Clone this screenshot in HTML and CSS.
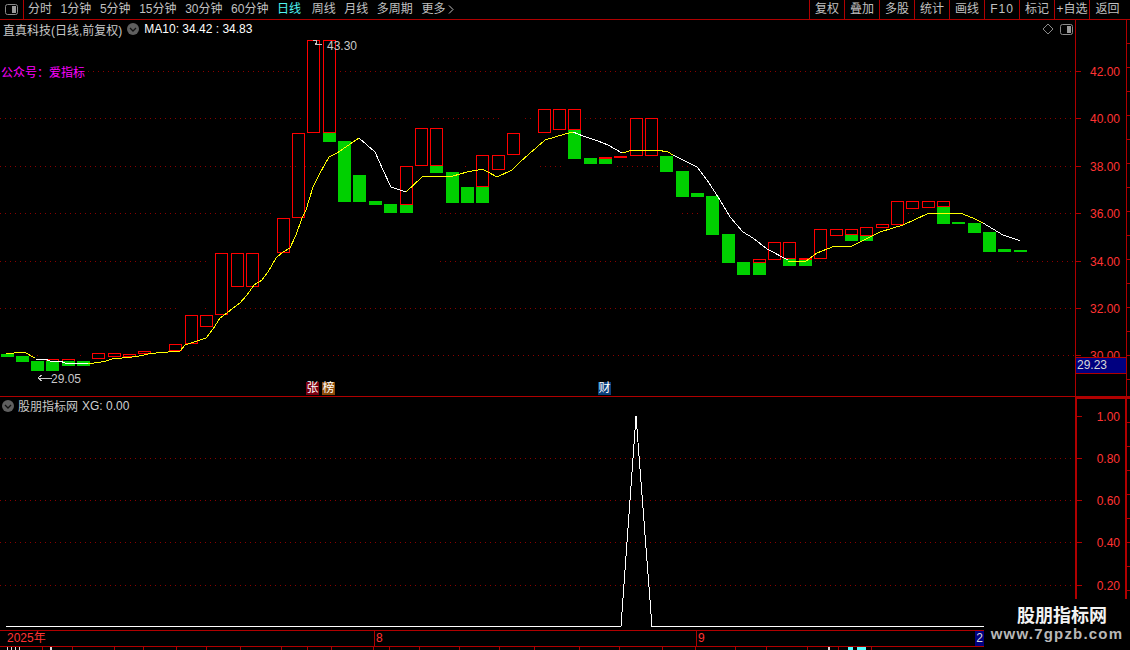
FILE: index.html
```html
<!DOCTYPE html>
<html lang="zh">
<head>
<meta charset="utf-8">
<title>直真科技</title>
<link rel="stylesheet" href="styles.css">
</head>
<body>
<div class="app">
  <header class="toolbar">
    <div class="panel-btn"><svg width="13" height="11" viewBox="0 0 13 11"><rect x=".5" y=".5" width="12" height="10" rx="2" class="ico-frame"/><rect x="7" y="2" width="4" height="7" class="ico-fill"/></svg></div>
    <nav class="periods">
      <span>分时</span><span>1分钟</span><span>5分钟</span><span>15分钟</span><span>30分钟</span><span>60分钟</span><span class="on">日线</span><span>周线</span><span>月线</span><span>多周期</span><span class="more">更多<svg width="6" height="9" viewBox="0 0 6 9"><path d="M1 .5l4 4-4 4"/></svg></span>
    </nav>
    <div class="tools">
      <span>复权</span><span>叠加</span><span>多股</span><span>统计</span><span>画线</span><span class="spaced">F10</span><span>标记</span><span>+自选</span><span class="back">返回</span>
    </div>
  </header>

  <section class="pane pane-main">
    <div class="plot">
      <svg class="chart" width="1075" height="377" viewBox="0 20 1075 377">
        <g class="grid">
          <path d="M88 71H302M340 71H1075"/>
          <path d="M0 118H303M340 118H410M433 118H502M525 118H535M580 118H627M665 118H1075"/>
          <path d="M0 166H300M305 166H325M465 166H470M540 166H562M617 166H660M682 166H690M710 166H1075"/>
          <path d="M0 213H275M440 213H653M682 213H702M725 213H870M908 213H917M985 213H1075"/>
          <path d="M0 261H210M440 261H720M815 261H993M1017 261H1075"/>
          <path d="M0 308H178M205 308H210M240 308H1075"/>
          <path d="M32 355H42M80 355H85M188 355H1075"/>
        </g>
        <g class="up" id="ups"></g>
        <g class="dn" id="dns"></g>
        <polyline class="ma white" points="36,359 45,359 50,361 60,361 65,363 75,363.5 88,364"/>
        <polyline class="ma yellow" points="6,354 14,353 24,352 35,358"/>
        <polyline class="ma yellow" points="88,364 101,362 106,361 112,359 122,358 132,357 142,355.5 148,354 156,353 168,352 180,351 185,345 200,340 206,338 210,333 215,326 220,318 227,313 233,308 240,303 247,295 254,285 262,280 268,272 276,258 283,252 290,248 296,235 302,218 306,210 313,187 320,173 329,157 337,153 359,138"/>
        <polyline class="ma white" points="359,138 375,152 383,170 391,187 400,190 406,192"/>
        <polyline class="ma yellow" points="406,192 422,177 450,176 453,176 460,174 467,172 478,170 482,169 488,172 497,177 512,170 520,162 537,147 545,140 555,137 565,134 573,132"/>
        <polyline class="ma white" points="573,132 583,136 598,141 608,145 622,153"/>
        <polyline class="ma yellow" points="622,153 633,150 657,150 668,152 673,155"/>
        <polyline class="ma white" points="673,155 697,167 707,180 720,200 730,217 743,232 753,238 767,249 788,260"/>
        <polyline class="ma yellow" points="788,261 806,261 817,253 827,249 835,246 852,246 870,237 880,232 903,225 927,214 937,213 960,213 973,218 983,223"/>
        <polyline class="ma white" points="983,223 1003,235 1018,240 1020,241"/>
        <path class="note-line" d="M313 41a2 2 0 1 1 2 3l7 1"/>
        <path class="note-line" d="M38 378h14M38 378l4-3M38 378l4 3"/>
      </svg>
      <div class="title-row">
        <span class="stock">直真科技(日线,前复权)</span>
        <span class="round-btn"><svg width="12" height="12" viewBox="0 0 12 12"><path d="M3 5l3 3 3-3"/></svg></span>
        <span class="ma-text">MA10: 34.42 : 34.83</span>
      </div>
      <div class="plot-icons">
        <svg width="12" height="12" viewBox="0 0 12 12"><path d="M6 1l5 5-5 5-5-5z" class="ico-frame"/></svg>
        <svg width="13" height="11" viewBox="0 0 13 11"><rect x=".5" y=".5" width="12" height="10" rx="2" class="ico-frame"/><rect x="7" y="2" width="4" height="7" class="ico-fill"/></svg>
      </div>
      <div class="promo">公众号：爱指标</div>
      <div class="mark mark-high">43.30</div>
      <div class="mark mark-low">29.05</div>
      <div class="badge badge-zhang">张</div>
      <div class="badge badge-bang">榜</div>
      <div class="badge badge-cai">财</div>
    </div>
    <aside class="axis axis-main">
      <div class="tick t42">42.00</div>
      <div class="tick t40">40.00</div>
      <div class="tick t38">38.00</div>
      <div class="tick t36">36.00</div>
      <div class="tick t34">34.00</div>
      <div class="tick t32">32.00</div>
      <div class="tick t30">30.00</div>
      <div class="price-tag">29.23</div>
    </aside>
  </section>

  <section class="pane pane-sub">
    <div class="plot">
      <svg class="chart" width="1075" height="233" viewBox="0 397 1075 233">
        <g class="grid">
          <path d="M0 458H1075M0 500H1075M0 542H1075M0 585H1075"/>
        </g>
        <polyline class="signal" points="6,626.5 621,626.5 636,416 652,626.5 1010,626.5"/>
      </svg>
      <div class="title-row title-sub">
        <span class="round-btn"><svg width="12" height="12" viewBox="0 0 12 12"><path d="M3 5l3 3 3-3"/></svg></span>
        <span class="stock">股朋指标网</span>
        <span class="ma-text sub-text">XG: 0.00</span>
      </div>
    </div>
    <aside class="axis axis-sub">
      <div class="tick s100">1.00</div>
      <div class="tick s80">0.80</div>
      <div class="tick s60">0.60</div>
      <div class="tick s40">0.40</div>
      <div class="tick s20">0.20</div>
    </aside>
  </section>

  <footer class="dates">
    <span class="d d-year">2025年</span>
    <span class="d d-8">8</span>
    <span class="d d-9">9</span>
    <span class="d-now">2</span>
  </footer>
  <div class="statusbar">
    <i class="c1"></i><i class="c2"></i><i class="c3"></i><i class="c4"></i><i class="c5"></i><i class="c6"></i><i class="c7"></i><i class="c8"></i><i class="c9"></i><i class="c10"></i><i class="c11"></i><i class="c12"></i><i class="c13"></i><i class="c14"></i><i class="c15"></i><i class="c16"></i><i class="c17"></i><i class="c18"></i><i class="c19"></i><i class="c20"></i><i class="c21"></i><i class="c22"></i><i class="c23"></i><i class="c24"></i><i class="c25"></i>
    <b class="peek peek-a"></b><b class="peek peek-b"></b><b class="peek peek-c"></b><b class="peek peek-d"></b>
  </div>

  <div class="watermark">
    <div class="wm-cn">股朋指标网</div>
    <div class="wm-url">www.7gpzb.com</div>
  </div>
</div>
<script src="chart.js"></script>
</body>
</html>
```
FILE: styles.css
```css
* { box-sizing: border-box; }
html, body { margin: 0; padding: 0; background: #000; }
body { width: 1130px; height: 650px; overflow: hidden; font-family: "Liberation Sans", "Noto Sans CJK SC", sans-serif; color: #c8c8c8; }
.app { position: relative; width: 1130px; height: 650px; display: flex; flex-direction: column; background: #000; overflow: hidden; }

.toolbar { height: 20px; flex: none; display: flex; align-items: stretch; border-bottom: 1px solid #b00000; font-size: 12px; line-height: 19px; }
.panel-btn { width: 24px; flex: none; border-right: 1px solid #b00000; display: flex; align-items: center; justify-content: center; }
.ico-frame { fill: none; stroke: #8a8a8a; stroke-width: 1; }
.ico-fill { fill: #9a9a9a; }
.periods { display: flex; gap: 8.6px; padding-left: 4px; flex: 1; color: #c0c0c0; }
.periods span { white-space: nowrap; }
.periods .on { color: #4ff4f4; padding-right: 2px; }
.more { display: inline-flex; align-items: center; gap: 3px; }
.more path { fill: none; stroke: #c0c0c0; stroke-width: 1; }
.tools { display: flex; height: 19px; }
.tools span { width: 35px; text-align: center; border-left: 1px solid #b00000; color: #c0c0c0; white-space: nowrap; }
.tools .back { width: 41px; padding-right: 5px; }
.tools .spaced { letter-spacing: 1px; }

.pane { position: relative; flex: none; display: flex; border-bottom: 1px solid #b00000; }
.pane-main { height: 377px; }
.pane-sub { height: 234px; }
.plot { position: relative; width: 1075px; flex: none; }
.chart { position: absolute; left: 0; top: 0; display: block; }
.grid path { fill: none; stroke: #8a0000; stroke-width: 1; stroke-dasharray: 1 4; shape-rendering: crispEdges; }
.up rect { fill: none; stroke: #ff0000; stroke-width: 1; shape-rendering: crispEdges; }
.up rect.solid { fill: #ff0000; }
.dn rect { fill: #00d000; shape-rendering: crispEdges; }
.ma { fill: none; stroke-width: 1; shape-rendering: crispEdges; }
.yellow { stroke: #ffff00; }
.white { stroke: #ffffff; }
.note-line { fill: none; stroke: #c8c8c8; stroke-width: 1; shape-rendering: crispEdges; }
.signal { fill: none; stroke: #ffffff; stroke-width: 1; shape-rendering: crispEdges; }

.title-row { position: relative; display: flex; align-items: center; gap: 5px; height: 18px; font-size: 12px; padding-left: 3px; white-space: nowrap; }
.title-sub { height: 17px; padding-left: 2px; gap: 4px; }
.stock { color: #c8c8c8; }
.ma-text { color: #ffffff; }
.sub-text { color: #d0d0d0; }
.round-btn { width: 12px; height: 12px; border-radius: 50%; background: #5f5f5f; display: inline-flex; }
.round-btn svg path { fill: none; stroke: #111; stroke-width: 1.3; }
.plot-icons { position: absolute; left: 1042px; top: 3px; display: flex; gap: 6px; align-items: center; }
.promo { position: absolute; left: 1px; top: 45px; font-size: 12px; color: #ff00ff; line-height: 16px; }
.mark { position: absolute; font-size: 12px; line-height: 14px; color: #c8c8c8; }
.mark-high { left: 327px; top: 19px; }
.mark-low { left: 51px; top: 352px; }
.badge { position: absolute; top: 362px; width: 13px; height: 13px; font-size: 12px; line-height: 13px; text-align: center; color: #fff; }
.badge-zhang { left: 306px; background: #7a0010; }
.badge-bang { left: 322px; background: #8a4a08; }
.badge-cai { left: 598px; background: #0b3f7a; }

.axis { position: relative; flex: 1; border-left: 1px solid #b00000; }
.axis::after { content: ""; position: absolute; right: 0; top: 0; bottom: 0; width: 3px; background: repeating-linear-gradient(#000 0, #000 23px, #b00000 23px, #b00000 24px); }
.axis-sub { border-left-width: 2px; border-top: 2px solid #b00000; margin-right: 0; background: linear-gradient(#b00000, #b00000) 48px 0 / 2px 100% no-repeat; }
.axis-main { background: linear-gradient(#b00000, #b00000) 50px 0 / 1px 100% no-repeat; }
.tick { position: absolute; left: 0; right: 10px; text-align: right; font-size: 12px; line-height: 14px; color: #ff3333; }
.tick::before { content: ""; position: absolute; left: 0; top: 7px; width: 5px; height: 1px; background: #b00000; }
.t42 { top: 45px; } .t40 { top: 92px; } .t38 { top: 140px; } .t36 { top: 187px; }
.t34 { top: 235px; } .t32 { top: 282px; } .t30 { top: 329px; }
.t42::before, .t40::before, .t38::before, .t36::before, .t34::before, .t32::before, .t30::before { top: 6px; }
.s100 { top: 11px; } .s80 { top: 53px; } .s60 { top: 95px; } .s40 { top: 137px; } .s20 { top: 180px; }
.axis-sub .tick::before { top: 6px; }
.price-tag { position: absolute; left: 0; top: 337px; width: 50px; height: 17px; background: #000080; color: #d8d8d8; font-size: 12px; line-height: 15px; padding-left: 1px; border-top: 1px solid #b00000; border-bottom: 1px solid #b00000; }

.dates { position: relative; height: 16px; flex: none; border-bottom: 1px solid #b00000; font-size: 12px; line-height: 15px; color: #ff3333; }
.d { position: absolute; top: 0; padding-left: 1px; }
.d-year { left: 6px; }
.d-8 { left: 374px; border-left: 1px solid #b00000; }
.d-9 { left: 696px; border-left: 1px solid #b00000; }
.d-now { position: absolute; left: 975px; top: 0; width: 9px; height: 15px; background: #000080; color: #d8d8d8; text-align: center; }
.statusbar { position: relative; display: flex; height: 3px; flex: none; }
.statusbar i { display: block; height: 3px; border-right: 1px solid #b00000; }
.c1 { width: 43px; } .c2 { width: 30px; } .c3 { width: 42px; } .c4 { width: 29px; } .c5 { width: 33px; }
.c6 { width: 30px; } .c7 { width: 34px; } .c8 { width: 41px; } .c9 { width: 26px; } .c10 { width: 24px; }
.c11 { width: 42px; } .c12 { width: 16px; } .c13 { width: 30px; } .c14 { width: 40px; } .c15 { width: 40px; }
.c16 { width: 35px; } .c17 { width: 45px; } .c18 { width: 40px; } .c19 { width: 43px; } .c20 { width: 33px; }
.c21 { width: 40px; } .c22 { width: 31px; } .c23 { width: 41px; } .c24 { width: 31px; } .c25 { width: 33px; }
.peek { position: absolute; top: 0; height: 3px; }
.peek-a { left: 7px; width: 14px; background: repeating-linear-gradient(90deg, #ddd 0, #ddd 1px, transparent 1px, transparent 4px); }
.peek-b { left: 50px; width: 2px; background: #ddd; }
.peek-c { left: 828px; width: 2px; background: #ddd; }
.peek-d { left: 848px; width: 18px; background: linear-gradient(90deg, #5ff 0, #5ff 5px, transparent 5px, transparent 9px, #5ff 9px); }

.watermark { position: absolute; left: 984px; top: 599px; width: 146px; height: 51px; background: #000; text-align: center; }
.wm-cn { margin-top: 4px; padding-left: 10px; font-size: 18px; line-height: 22px; font-weight: 700; color: #f2f2f2; font-family: "Noto Sans CJK SC", sans-serif; }
.wm-url { font-size: 15px; line-height: 17px; font-weight: 700; letter-spacing: 1.2px; color: #b8b8b8; font-family: "Liberation Sans", sans-serif; }
```
FILE: chart.js
```js
var NS = "http://www.w3.org/2000/svg";
var ups = [[46,359,2.5],[62,359,6],[92,353,6],[108,353,4],[123,354,3],[138,351,3],[154,351,1],[169,344,7],[185,315,29],[200,315,12],[215,253,62],[231,253,34],[246,253,34],[262,253,1],[277,218,35],[292,133,85],[307,40,93],[323,40,93],[400,166,39],[415,128,38],[430,128,38],[476,155,32],[492,155,15],[507,133,22],[522,133,1],[538,109,24],[553,109,21],[568,109,21],[630,118,38],[645,118,38],[753,259,4],[768,242,18],[783,242,17],[814,229,30],[830,229,7],[845,229,6],[860,227,9],[876,224,4],[891,201,24],[906,201,8],[922,201,7],[937,201,6]];
var solid = [[599,157,2],[614,156,2],[799,258,2]];
var dns = [[1,354,3],[16,356,6],[31,361,10],[46,361,10],[62,361,5],[77,361,5],[323,133,9],[338,141,61],[353,175,27],[369,201,4],[384,204,9],[400,205,8],[430,166,7],[446,172,31],[461,187,16],[476,187,16],[568,130,29],[584,158,6],[599,159,5],[660,156,16],[676,171,26],[691,193,4],[706,196,39],[722,234,29],[737,262,13],[753,263,12],[783,259,7],[799,260,6],[845,235,6],[860,236,5],[937,207,17],[952,222,2],[968,223,10],[983,232,20],[998,249,3],[1014,250,2]];
var gu = document.getElementById("ups"), gd = document.getElementById("dns");
function add(g, x, y, w, h, cls) {
  var r = document.createElementNS(NS, "rect");
  r.setAttribute("x", x); r.setAttribute("y", y);
  r.setAttribute("width", w); r.setAttribute("height", h);
  if (cls) r.setAttribute("class", cls);
  g.appendChild(r);
}
dns.forEach(function (c) { add(gd, c[0], c[1], 13, c[2]); });
ups.forEach(function (c) { add(gu, c[0] + 0.5, c[1] + 0.5, 12, Math.max(c[2] - 1, 0)); });
solid.forEach(function (c) { add(gu, c[0] + 0.5, c[1] + 0.5, 12, c[2] - 1, "solid"); });
```
